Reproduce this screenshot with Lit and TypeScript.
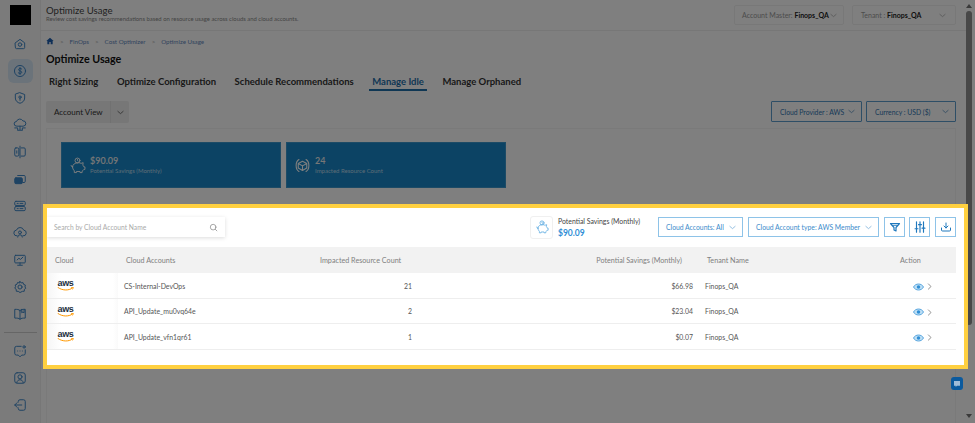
import { LitElement, html, css, svg } from "lit";
import { customElement } from "lit/decorators.js";

const ic = (body: unknown, size = 14, cls = "", sw = 1.7) => html`<svg class=${cls} width=${size} height=${size} viewBox="0 0 24 24" fill="none" stroke="currentColor" stroke-width=${sw} stroke-linecap="round" stroke-linejoin="round">${body}</svg>`;
const chevron = (size = 9) => ic(svg`<path d="M5 9l7 6 7-6"/>`, size, "chev");

const navTop = [
  svg`<path d="M4 10l8-6 8 6v8a2 2 0 0 1-2 2H6a2 2 0 0 1-2-2z"/><circle cx="12" cy="13" r="3"/>`,
  svg`<circle cx="12" cy="12" r="9.500"/><path d="M15 8.500c-1-1-5.500-1.500-5.500 1.200 0 3 5.500 1.500 5.500 4.500 0 2.600-4.500 2.300-6 1M12 6v12"/>`,
  svg`<path d="M12 3l8 3v6c0 5-4 8-8 9-4-1-8-4-8-9V6z"/><circle cx="12" cy="10.500" r="2"/><path d="M12 12.500V16"/>`,
  svg`<path d="M6 14a4 4 0 0 1 0-8 6 6 0 0 1 11-1 4.500 4.500 0 0 1 1 9zM3 17h5v4M21 17h-5v4M12 14v6M9 21h6"/>`,
  svg`<rect x="3" y="5" width="7" height="14" rx="2"/><path d="M14 5h5a2 2 0 0 1 2 2v10a2 2 0 0 1-2 2h-5M12 2v20M6.500 10v4"/>`,
  svg`<path d="M8 6h11a2 2 0 0 1 2 2v8a2 2 0 0 1-2 2h-2"/><rect x="3" y="10" width="13" height="10" rx="2" fill="currentColor"/>`,
  svg`<rect x="3" y="4" width="18" height="7" rx="2"/><rect x="3" y="13" width="18" height="7" rx="2"/><path d="M7 7.500h2M12 7.500h5M7 16.500h2M12 16.500h5"/>`,
  svg`<path d="M7 17a5 5 0 0 1-1-10 6.500 6.500 0 0 1 12.300 0A5 5 0 0 1 17 17"/><circle cx="12" cy="11" r="2.500"/><path d="M8 19a4 4 0 0 1 8 0"/>`,
  svg`<rect x="3" y="4" width="18" height="13" rx="1.500"/><path d="M7 12l3-3 3 2 4-4M12 17v3M8 21h8"/>`,
  svg`<path d="M12 2.500l2 2.500 3.200-.5 1 3 3 1.200-.7 3.300L22 14l-2.500 2-.2 3.300-3.300.2L12 21.500 9 19.500l-3.300-.2-.2-3.300L3 14l1.500-2.500L3.800 8.500l3-1.200 1-3L11 5z"/><circle cx="12" cy="12" r="3.500"/>`,
  svg`<path d="M12 6c-2-2-5-2-9-2v15c4 0 7 0 9 2 2-2 5-2 9-2V4c-4 0-7 0-9 2zM12 6v15"/><path d="M15 4v6l2-1.500 2 1.500V4"/>`,
];
const navBottom = [
  svg`<path d="M14 4H6a3 3 0 0 0-3 3v9a3 3 0 0 0 3 3h3l3 3 3-3h3a3 3 0 0 0 3-3V10M8 12h.01M12 12h.01M16 12h.01"/><circle cx="19" cy="5" r="2"/>`,
  svg`<rect x="3" y="3" width="18" height="18" rx="4"/><circle cx="12" cy="10" r="3.500"/><path d="M6.500 20c.5-3.500 3-5 5.500-5s5 1.500 5.500 5"/>`,
  svg`<path d="M9 7V6a3 3 0 0 1 3-3h6a3 3 0 0 1 3 3v12a3 3 0 0 1-3 3h-6a3 3 0 0 1-3-3v-1M15 12H3M7 8l-4 4 4 4"/>`,
];
const piggy = svg`<path d="M5 14c0-3.500 3.500-6 8-6 2 0 3 .5 4 1l3-1-.5 3.500c.8.800 1.200 1.500 1.500 2.500h1.500v3.500H21c-.5 1-1.500 2-2.500 2.500v2h-3v-1.500h-5V22h-3v-2.500C6 18 5 16 5 14zM5 14c-1 0-2-.5-2-2"/><circle cx="12" cy="5" r="3.500"/><path d="M12 3.500V5l1 .8"/>`;
const box = svg`<path d="M12 6l6 3.200v6.300L12 19l-6-3.500V9.200zM6 9.200l6 3.300 6-3.300M12 12.500V19"/><path d="M7 3.500C4.500 5 3 8 3 12s1.500 7 4 8.500M17 3.500c2.500 1.500 4 4.500 4 8.500s-1.500 7-4 8.500"/>`;

const rows = [
  ["CS-Internal-DevOps", "21", "$66.98"],
  ["API_Update_mu0vq64e", "2", "$23.04"],
  ["API_Update_vfn1qr61", "1", "$0.07"],
];

@customElement("app-root")
export class AppRoot extends LitElement {
  static styles = css`
    :host { display: block; position: relative; width: 975px; height: 423px; overflow: hidden; background: #fff; font-family: "Lato", "Noto Sans", sans-serif; color: #333; }
    * { box-sizing: border-box; }
    span { white-space: nowrap; }
    svg { display: block; flex: none; }
    .app { display: flex; height: 423px; }
    .side { width: 41px; flex: none; background: #f6f6f6; border-right: 1px solid #eee; display: flex; flex-direction: column; align-items: center; padding-top: 5px; color: #3d86c6; }
    .logo { width: 21px; height: 20px; background: #000; margin-bottom: 7px; }
    .nav { width: 25px; height: 24px; display: flex; align-items: center; justify-content: center; border-radius: 6px; margin-bottom: 3px; }
    .nav.on { background: #d6e6f5; }
    .rule { width: 33px; height: 1px; background: #ccc; margin: 3px 0 6px; }
    .main { flex: 1; min-width: 0; display: flex; flex-direction: column; }
    .top { height: 31px; flex: none; border-bottom: 1px solid #eee; display: flex; justify-content: space-between; align-items: flex-start; padding: 5px 10px 0 5px; }
    .top h1 { margin: 0; font-size: 9.600px; line-height: 11px; font-weight: 400; color: #444; }
    .top p { margin: 0; font-size: 5.900px; line-height: 6px; color: #888; }
    .selects { display: flex; gap: 8px; }
    .sel { height: 20px; border: 1px solid #f0f0f0; border-radius: 2px; display: flex; align-items: center; justify-content: space-between; font-size: 7px; color: #999; padding: 0 5px 0 7px; }
    .sel b { color: #222; font-weight: 700; }
    .sel.a { width: 110px; } .sel.t { width: 104px; padding-left: 8px; padding-right: 8px; }
    .crumb { display: flex; align-items: center; height: 20px; padding-left: 5px; font-size: 6.200px; color: #5f87bc; gap: 6px; flex: none; }
    .crumb .home { color: #1f5fae; }
    .crumb .sep { color: #aaa; }
    .title { margin: 0; padding-left: 5px; font-size: 10.700px; line-height: 16px; font-weight: 700; color: #111; flex: none; }
    .tabs { display: flex; margin-top: 5px; height: 19px; flex: none; }
    .tab { font-size: 9.500px; font-weight: 700; color: #333; padding: 4px 3px 0; height: 19px; margin-left: 5px; white-space: nowrap; }
    .tab.r { margin-right: 7.500px; }
    .tab.on { color: #1f6ea8; border-bottom: 2px solid #1f6ea8; }
    .bar { display: flex; justify-content: space-between; align-items: flex-start; padding: 0 10px 0 5px; margin-top: 10px; height: 27px; flex: none; }
    .view { width: 83px; height: 22px; background: #eee; border-radius: 2px; display: flex; align-items: center; font-size: 8px; color: #333; }
    .view span { flex: 1; padding-left: 8px; }
    .view i { width: 19px; height: 22px; border-left: 1px solid #e2e2e2; display: flex; align-items: center; justify-content: center; }
    .right { display: flex; gap: 4px; }
    .pick { height: 21px; border: 1px solid #5d9ccc; border-radius: 1px; display: flex; align-items: center; justify-content: space-between; font-size: 6.800px; color: #2f74b0; padding: 0 5px 0 8px; }
    .pick.p { width: 91px; } .pick.c { width: 90px; }
    .card { flex: 1; margin: 0 10px 0 5px; border: 1px solid #f4f4f4; border-bottom: 0; padding: 13px 0 0 14px; min-height: 0; }
    .tiles { display: flex; gap: 5px; height: 46px; }
    .tile { width: 220px; background: #1987c8; display: flex; align-items: center; gap: 4px; color: #fff; padding-left: 7px; border: 1px solid #3a96cc; }
    .tile .l { display: flex; flex-direction: column; gap: 1px; padding-top: 1px; }
    .tile strong { font-size: 9px; line-height: 10px; font-weight: 600; color: #eee; }
    .tile small { font-size: 6px; line-height: 8px; color: #b9d8ec; }
    .panel { position: relative; z-index: 10; background: #fff; outline: 4px solid #ffd040; margin: 20px -9px 0 -14px; height: 157px; padding: 9px 8px 0 0; }
    .ptools { display: flex; align-items: center; height: 20px; }
    .search { width: 178px; height: 20px; display: flex; align-items: center; justify-content: space-between; padding: 0 7px; box-shadow: 0 1px 4px rgba(0,0,0,.14); font-size: 6.700px; color: #aaa; margin-right: auto; }
    .search svg { color: #777; }
    .sum { display: flex; align-items: center; gap: 5px; }
    .sum .ib { width: 23px; height: 23px; border: 1px solid #f0f0f0; border-radius: 3px; display: flex; align-items: center; justify-content: center; color: #5aa9e0; }
    .sum .t { display: flex; flex-direction: column; width: 100px; gap: 3px; }
    .sum span { font-size: 6.900px; line-height: 8px; color: #444; }
    .sum b { font-size: 8.500px; line-height: 10px; color: #2f8ed6; font-weight: 700; }
    .flt { height: 20px; border: 1px solid #8ec3e8; display: flex; align-items: center; justify-content: space-between; font-size: 6.800px; color: #3b8bcb; padding: 0 5px 0 7px; margin-right: 5px; }
    .flt.ca { width: 85px; } .flt.ct { width: 131px; }
    .flt svg { color: #5b9ed2; }
    .btn { width: 21px; height: 20px; border: 1px solid #8ec3e8; display: flex; align-items: center; justify-content: center; color: #1f78bd; margin-right: 4px; }
    .btn.m { margin-right: 5px; }
    .btn:last-child { margin-right: 0; }
    .grid { display: grid; grid-template-columns: 71px 194px 108px 278px 182px 76px; align-items: center; }
    .head { margin-top: 10px; height: 26px; background: #f2f2f2; font-size: 7.200px; color: #808080; white-space: nowrap; }
    .head > div { padding-left: 8px; }
    .head .rs { padding-right: 16px; padding-left: 0; text-align: right; }
    .head .tn { padding-left: 9px; }
    .head .ac { padding-left: 20px; }
    .row { height: 25px; border-bottom: 1px solid #eee; font-size: 6.900px; color: #555; }
    .row.tall { height: 26px; }
    .row .cl { height: 100%; background: linear-gradient(90deg, #f6f6f6 0, #fff 14px, #fff 66px, #fafafa 71px); display: flex; align-items: center; padding-left: 10px; }
    .row .ca { padding-left: 6px; }
    .row .n { text-align: right; padding-right: 8px; }
    .row .v { text-align: right; padding-right: 5px; }
    .row .tn { padding-left: 7px; }
    .row .ac { padding-left: 33px; display: flex; align-items: center; gap: 1px; padding-top: 2px; }
    .aws { display: flex; flex-direction: column; align-items: center; width: 17px; color: #232f3e; }
    .aws span { font: 700 9px/7px "Liberation Sans", sans-serif; letter-spacing: -.3px; }
    .eye { color: #2f8ed6; }
    .gt { color: #555; }
    .dim { position: absolute; inset: 0; background: rgba(0,0,0,.5); z-index: 5; }
    .sb { width: 9px; flex: none; position: relative; z-index: 6; display: flex; flex-direction: column; align-items: center; height: 423px; padding-right: 3px; }
    .sb .up, .sb .dn { width: 0; height: 0; border-left: 3px solid transparent; border-right: 3px solid transparent; margin-top: 4px; }
    .sb .up { border-bottom: 4px solid #3a3a3a; }
    .sb .th { width: 6px; height: 314px; border-radius: 3px; background: #484848; margin-top: 3px; }
    .sb .dn { border-top: 4px solid #3a3a3a; margin-top: auto; margin-bottom: 5px; }
    .chat { position: absolute; left: 951px; top: 377px; width: 12px; height: 13px; background: #0b5a9e; border-radius: 3px; z-index: 6; display: flex; align-items: center; justify-content: center; color: #9fbcd8; }
  `;

  render() {
    return html`
      <div class="app">
        <aside class="side">
          <div class="logo"></div>
          ${navTop.map((b, i) => html`<div class="nav ${i === 1 ? "on" : ""}">${ic(b, 14)}</div>`)}
          <div class="rule"></div>
          ${navBottom.map((b) => html`<div class="nav">${ic(b, 14)}</div>`)}
        </aside>
        <main class="main">
          <header class="top">
            <div>
              <h1>Optimize Usage</h1>
              <p>Review cost savings recommendations based on resource usage across clouds and cloud accounts.</p>
            </div>
            <div class="selects">
              <div class="sel a"><span>Account Master: <b>Finops_QA</b></span>${chevron()}</div>
              <div class="sel t"><span>Tenant : <b>Finops_QA</b></span>${chevron()}</div>
            </div>
          </header>
          <nav class="crumb">
            <svg class="home" width="8" height="8" viewBox="0 0 24 24" fill="currentColor"><path d="M12 2L1 12h3v10h6v-7h4v7h6V12h3z"/></svg>
            <span class="sep">&gt;</span><span>FinOps</span><span class="sep">&gt;</span><span>Cost Optimizer</span><span class="sep">&gt;</span><span>Optimize Usage</span>
          </nav>
          <h2 class="title">Optimize Usage</h2>
          <div class="tabs">
            <div class="tab r">Right Sizing</div>
            <div class="tab r">Optimize Configuration</div>
            <div class="tab r">Schedule Recommendations</div>
            <div class="tab r on">Manage Idle</div>
            <div class="tab">Manage Orphaned</div>
          </div>
          <div class="bar">
            <div class="view"><span>Account View</span><i>${chevron()}</i></div>
            <div class="right">
              <div class="pick p"><span>Cloud Provider : AWS</span>${chevron()}</div>
              <div class="pick c"><span>Currency : USD ($)</span>${chevron()}</div>
            </div>
          </div>
          <section class="card">
            <div class="tiles">
              <div class="tile">${ic(piggy, 17, "", 1.3)}<div class="l"><strong>$90.09</strong><small>Potential Savings (Monthly)</small></div></div>
              <div class="tile">${ic(box, 17, "", 1.5)}<div class="l"><strong>24</strong><small>Impacted Resource Count</small></div></div>
            </div>
            <div class="panel">
              <div class="ptools">
                <div class="search"><span>Search by Cloud Account Name</span>${ic(svg`<circle cx="11" cy="11" r="7.500"/><path d="M17 17l4 4"/>`, 9)}</div>
                <div class="sum">
                  <div class="ib">${ic(piggy, 14, "", 1.3)}</div>
                  <div class="t"><span>Potential Savings (Monthly)</span><b>$90.09</b></div>
                </div>
                <div class="flt ca"><span>Cloud Accounts: All</span>${chevron()}</div>
                <div class="flt ct"><span>Cloud Account type: AWS Member</span>${chevron()}</div>
                <div class="btn">${ic(svg`<path d="M3 5h18l-7 8v7l-4-2v-5z"/><path d="M7 8.500h10"/>`, 12, "", 2.4)}</div>
                <div class="btn m">${ic(svg`<path d="M6 3v18M12 3v18M18 3v18M3.500 15h5M9.500 8h5M15.500 14h5"/>`, 14, "", 2)}</div>
                <div class="btn">${ic(svg`<path d="M12 4v10M8 10l4 4 4-4M3 14v4a2 2 0 0 0 2 2h14a2 2 0 0 0 2-2v-4"/>`, 12, "", 2)}</div>
              </div>
              <div class="grid head">
                <div>Cloud</div><div>Cloud Accounts</div><div>Impacted Resource Count</div>
                <div class="rs">Potential Savings (Monthly)</div><div class="tn">Tenant Name</div><div class="ac">Action</div>
              </div>
              ${rows.map((r, i) => html`
                <div class="grid row ${i !== 1 ? "tall" : ""}">
                  <div class="cl"><div class="aws"><span>aws</span><svg width="17" height="4" viewBox="0 0 34 8" fill="none"><path d="M2 1c8 6 21 7 29 1" stroke="#f90" stroke-width="2" stroke-linecap="round"/><path d="M28 1h5l-2 4" stroke="#f90" stroke-width="1.500" fill="none"/></svg></div></div>
                  <div class="ca">${r[0]}</div>
                  <div class="n">${r[1]}</div>
                  <div class="v">${r[2]}</div>
                  <div class="tn">Finops_QA</div>
                  <div class="ac">
                    <svg class="eye" width="11" height="8" viewBox="0 0 22 16"><path d="M1 8c4-8 16-8 20 0-4 8-16 8-20 0z" fill="#bfe0f5" stroke="currentColor" stroke-width="1.500"/><circle cx="11" cy="8" r="3.500" fill="currentColor"/></svg>
                    <span class="gt">${ic(svg`<path d="M9 5l7 7-7 7"/>`, 9)}</span>
                  </div>
                </div>`)}
            </div>
          </section>
        </main>
        <div class="sb"><div class="up"></div><div class="th"></div><div class="dn"></div></div>
      </div>
      <div class="dim"></div>
      <div class="chat"><svg width="8" height="8" viewBox="0 0 24 24" fill="currentColor"><path d="M3 3h18v14h-9l-4 4v-4H3z"/></svg></div>
    `;
  }
}
